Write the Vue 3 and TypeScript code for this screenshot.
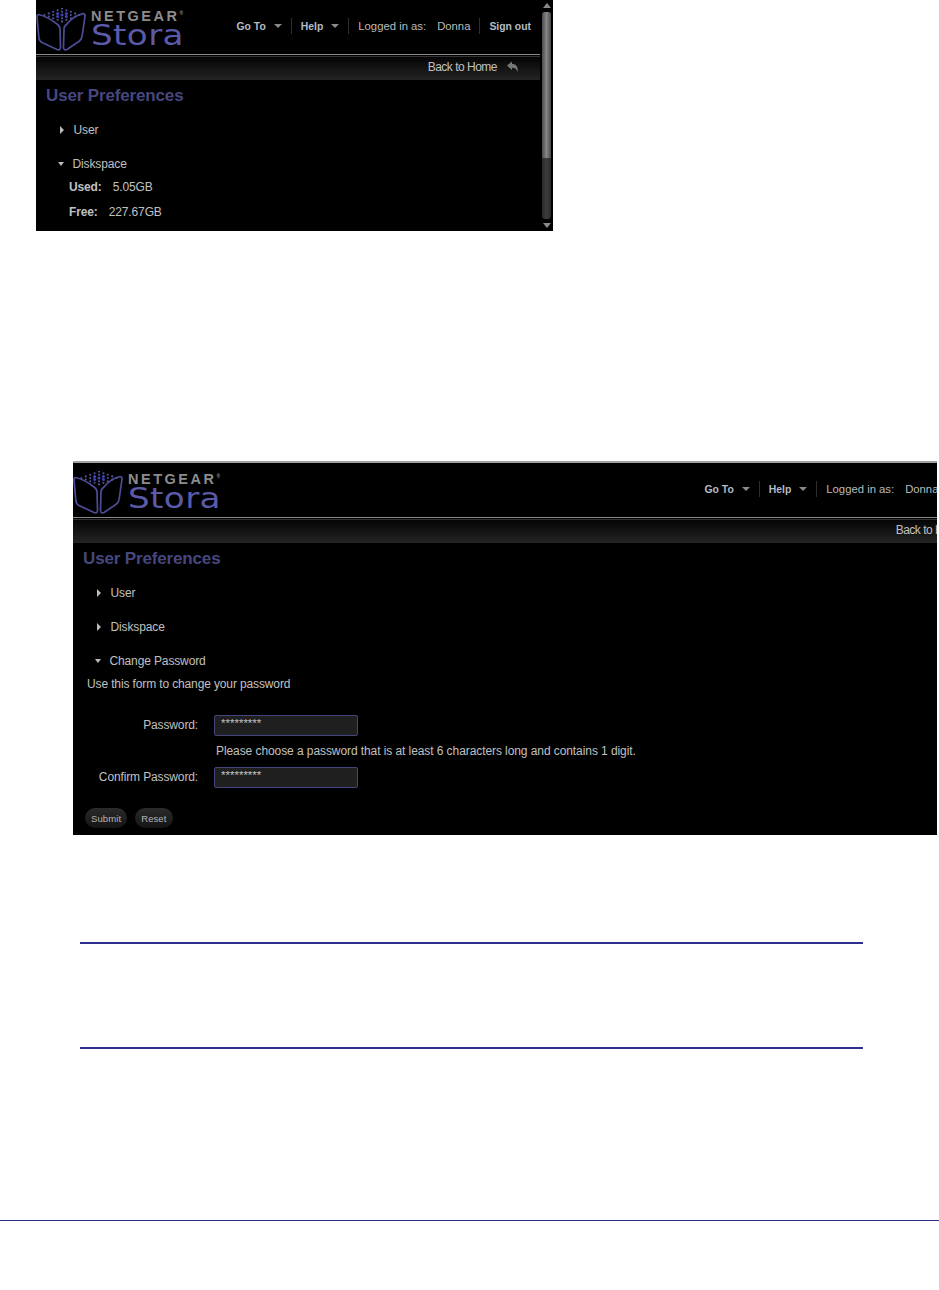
<script setup lang="ts">
const navItems = [
  { label: 'Go To', arrow: true },
  { label: 'Help', arrow: true }
]

const dots: { x: number; y: number; r: number; c: string }[] = []
for (let row = 0; row < 5; row++) {
  for (let col = 0; col < 5; col++) {
    const mid = Math.abs(col - 2) + Math.abs(row - 2) < 2
    dots.push({
      x: 26 + (col - row) * 4.4,
      y: 7 + (col + row - 4) * 1.6,
      r: mid ? 1.5 : 1.05,
      c: mid ? '#4040b8' : '#55559e'
    })
  }
}
</script>

<template>
  <div class="page">
    <section v-for="panel in ['first', 'second']" :key="panel" class="shot" :class="panel">
      <div class="app">
        <header class="top">
          <div class="logo">
            <svg class="cube" viewBox="0 0 50 44" width="50" height="44">
              <circle v-for="(d, i) in dots" :key="i" :cx="d.x" :cy="d.y" :r="d.r" :fill="d.c" />
              <path d="M2.5 6.5 C9 8 16 12 21 16 Q24 18 24 21 L24.5 39 Q24.5 43 21 41.5 L6 34.5 Q3 33 2.8 29 L1 9 Q1 6.5 2.5 6.5 Z" class="side" />
              <path d="M47 5.5 C41 7 35 11 31 16 Q28 18 28 21 L27.5 39 Q27.5 43 31 41.5 L43.5 33 Q46 31 46.3 27 L49 8 Q49 5.5 47 5.5 Z" class="side" />
            </svg>
            <div class="brand">
              <span class="netgear">NETGEAR<sup>®</sup></span>
              <span class="stora">Stora</span>
            </div>
          </div>
          <nav class="nav">
            <span v-for="item in navItems" :key="item.label" class="nav-item strong">
              {{ item.label }}<i class="caret"></i>
            </span>
            <span class="nav-item"><span class="logged">Logged in as:</span>Donna</span>
            <span class="nav-item strong last">Sign out</span>
          </nav>
        </header>
        <div class="bar">
          <span class="back">Back to Home</span>
          <svg class="back-icon" viewBox="0 0 12 12" width="12" height="12">
            <path d="M0 4.5 L5 0.5 V3 C9 3 11.5 5.5 10.5 11 C9.5 8 8 6.8 5 6.8 V9 Z" fill="#777" />
          </svg>
        </div>
        <div class="body">
          <h1>User Preferences</h1>
          <template v-if="panel === 'first'">
            <div class="row"><i class="tri right"></i>User</div>
            <div class="row"><i class="tri down"></i>Diskspace</div>
            <dl class="disk">
              <div><dt>Used:</dt><dd>5.05GB</dd></div>
              <div><dt>Free:</dt><dd>227.67GB</dd></div>
            </dl>
          </template>
          <template v-else>
            <div class="row"><i class="tri right"></i>User</div>
            <div class="row"><i class="tri right"></i>Diskspace</div>
            <div class="row"><i class="tri down"></i>Change Password</div>
            <p class="intro">Use this form to change your password</p>
            <form class="form" @submit.prevent>
              <label class="label">Password:</label>
              <div class="input">*********</div>
              <p class="hint">Please choose a password that is at least 6 characters long and contains 1 digit.</p>
              <label class="label">Confirm Password:</label>
              <div class="input">*********</div>
            </form>
            <div class="buttons">
              <button type="button">Submit</button>
              <button type="button">Reset</button>
            </div>
          </template>
        </div>
      </div>
      <aside v-if="panel === 'first'" class="scroll">
        <i class="up"></i>
        <span class="track"><span class="thumb"></span></span>
        <i class="dn"></i>
      </aside>
    </section>

    <div class="note"></div>
    <div class="footer"></div>
  </div>
</template>

<style scoped>
.page {
  width: 939px;
  height: 1290px;
  overflow: hidden;
  background: #fff;
  font-family: "Liberation Sans", Arial, sans-serif;
  font-size: 12px;
  letter-spacing: -0.13px;
  color: #c0c0c0;
}

.shot {
  display: flex;
  background: #000;
  overflow: hidden;
}

.shot.first {
  width: 517px;
  height: 231px;
  margin-left: 36px;
}

.shot.second {
  width: 864px;
  height: 374px;
  box-sizing: border-box;
  margin: 230px 0 0 73px;
  border-top: 2px solid #a0a0a0;
}

.first .app {
  width: 504px;
  flex: none;
}

.second .app {
  width: 935px;
  flex: none;
}

.top {
  height: 54px;
  display: flex;
  justify-content: space-between;
  border-bottom: 1px solid #8a8a8a;
}

.logo {
  display: flex;
  align-items: flex-start;
  padding-top: 8px;
}

.cube {
  flex: none;
}

.side {
  fill: none;
  stroke: #4d4d96;
  stroke-width: 1.7;
}

.brand {
  display: flex;
  flex-direction: column;
  margin-left: 5px;
}

.netgear {
  color: #8c8c8c;
  font-weight: 700;
  font-size: 14.5px;
  line-height: 16px;
  letter-spacing: 2.5px;
}

.netgear sup {
  font-size: 5px;
  letter-spacing: 0;
  vertical-align: 6px;
  line-height: 0;
}

.stora {
  color: #5a5aa8;
  font-family: "DejaVu Sans", sans-serif;
  font-size: 29px;
  line-height: 24px;
  margin-top: -1px;
  letter-spacing: 0.3px;
  transform: scaleX(1.18);
  transform-origin: left center;
}

.nav {
  display: flex;
  align-items: center;
  height: 18px;
  margin-top: 17px;
  padding-right: 9px;
}

.nav-item {
  display: flex;
  align-items: center;
  height: 16px;
  padding: 0 9px;
  font-size: 11.3px;
  letter-spacing: 0;
  border-right: 1px solid #2e2e2e;
  color: #bbb;
}

.nav-item.strong {
  font-weight: 700;
  font-size: 10.4px;
  color: #b4bcc4;
}

.nav-item.last {
  border: 0;
  padding-right: 0;
}

.logged {
  margin-right: 11px;
}

.caret {
  width: 0;
  height: 0;
  margin-left: 8px;
  border-left: 4px solid transparent;
  border-right: 4px solid transparent;
  border-top: 4px solid #8a8a8a;
}

.bar {
  height: 24px;
  margin-top: 1px;
  display: flex;
  align-items: center;
  justify-content: flex-end;
  padding: 0 21px 3px 0;
  background: linear-gradient(#050505, #242424);
  border-top: 1px solid #333;
  box-sizing: border-box;
}

.back {
  letter-spacing: -0.5px;
  margin-right: 10px;
}

.back-icon {
  flex: none;
}

.body {
  padding: 7px 0 0 10px;
}

h1 {
  margin: 0;
  height: 18px;
  font-size: 17px;
  line-height: 18px;
  font-weight: 700;
  letter-spacing: -0.15px;
  color: #47477f;
}

.row {
  display: flex;
  align-items: center;
  height: 16px;
  margin-top: 18px;
  padding-left: 13px;
}

h1 + .row {
  margin-top: 17px;
}

.tri {
  width: 0;
  height: 0;
  flex: none;
}

.tri.right {
  margin: 0 9.5px 0 1px;
  border-top: 4px solid transparent;
  border-bottom: 4px solid transparent;
  border-left: 4px solid #bbb;
}

.tri.down {
  margin: 0 8.5px 0 -1px;
  border-left: 3.5px solid transparent;
  border-right: 3.5px solid transparent;
  border-top: 4px solid #bbb;
}

.disk {
  margin: 2px 0 0;
  padding-left: 23px;
}

.disk div {
  display: flex;
  gap: 11px;
  height: 25px;
  align-items: center;
}

.disk dt {
  font-weight: 700;
}

.disk dd {
  margin: 0;
}

.intro {
  margin: 8px 0 0 4px;
  line-height: 14px;
}

.form {
  display: grid;
  grid-template-columns: 115px 144px;
  column-gap: 16px;
  align-items: center;
  margin-top: 24px;
}

.label {
  text-align: right;
  padding-bottom: 2px;
}

.input {
  height: 21px;
  box-sizing: border-box;
  padding: 1px 6px 0;
  border: 1px solid #45457e;
  border-radius: 2px;
  background: #1f1f1f;
  font-size: 11.5px;
  letter-spacing: 0;
  line-height: 13px;
}

.hint {
  grid-column: 2;
  width: 600px;
  margin: 8px 0 9px 2px;
  line-height: 14px;
  letter-spacing: -0.08px;
}

.buttons {
  display: flex;
  gap: 8px;
  margin-top: 20px;
  margin-left: 2px;
}

button {
  height: 20px;
  padding: 0 6px;
  border: 0;
  border-radius: 10px;
  background: linear-gradient(#2b2b2b, #141414);
  color: #b5b5b5;
  font: 9.5px "Liberation Sans", Arial, sans-serif;
  letter-spacing: 0.1px;
}

.scroll {
  width: 13px;
  display: flex;
  flex-direction: column;
  align-items: center;
}

.up,
.dn {
  width: 0;
  height: 0;
  flex: none;
  border-left: 4px solid transparent;
  border-right: 4px solid transparent;
}

.up {
  margin-top: 3px;
  border-bottom: 5px solid #8a8a8a;
}

.dn {
  margin: 0 0 3px;
  border-top: 5px solid #8a8a8a;
}

.track {
  flex: 1;
  width: 9px;
  margin: 4px 0;
  border-radius: 3px;
  background: linear-gradient(90deg, #2a2a2a, #3c3c3c 50%, #2a2a2a);
}

.thumb {
  display: block;
  width: 9px;
  height: 146px;
  border-radius: 3px 3px 0 0;
  background: linear-gradient(90deg, #4a4a4a, #868686 50%, #4a4a4a);
}

.note {
  width: 783px;
  height: 103px;
  margin: 107px 0 0 80px;
  border-top: 2px solid #2e2e8f;
  border-bottom: 2px solid #2e2e8f;
}

.footer {
  margin-top: 171px;
  border-top: 1px solid #2e2e8f;
}
</style>
